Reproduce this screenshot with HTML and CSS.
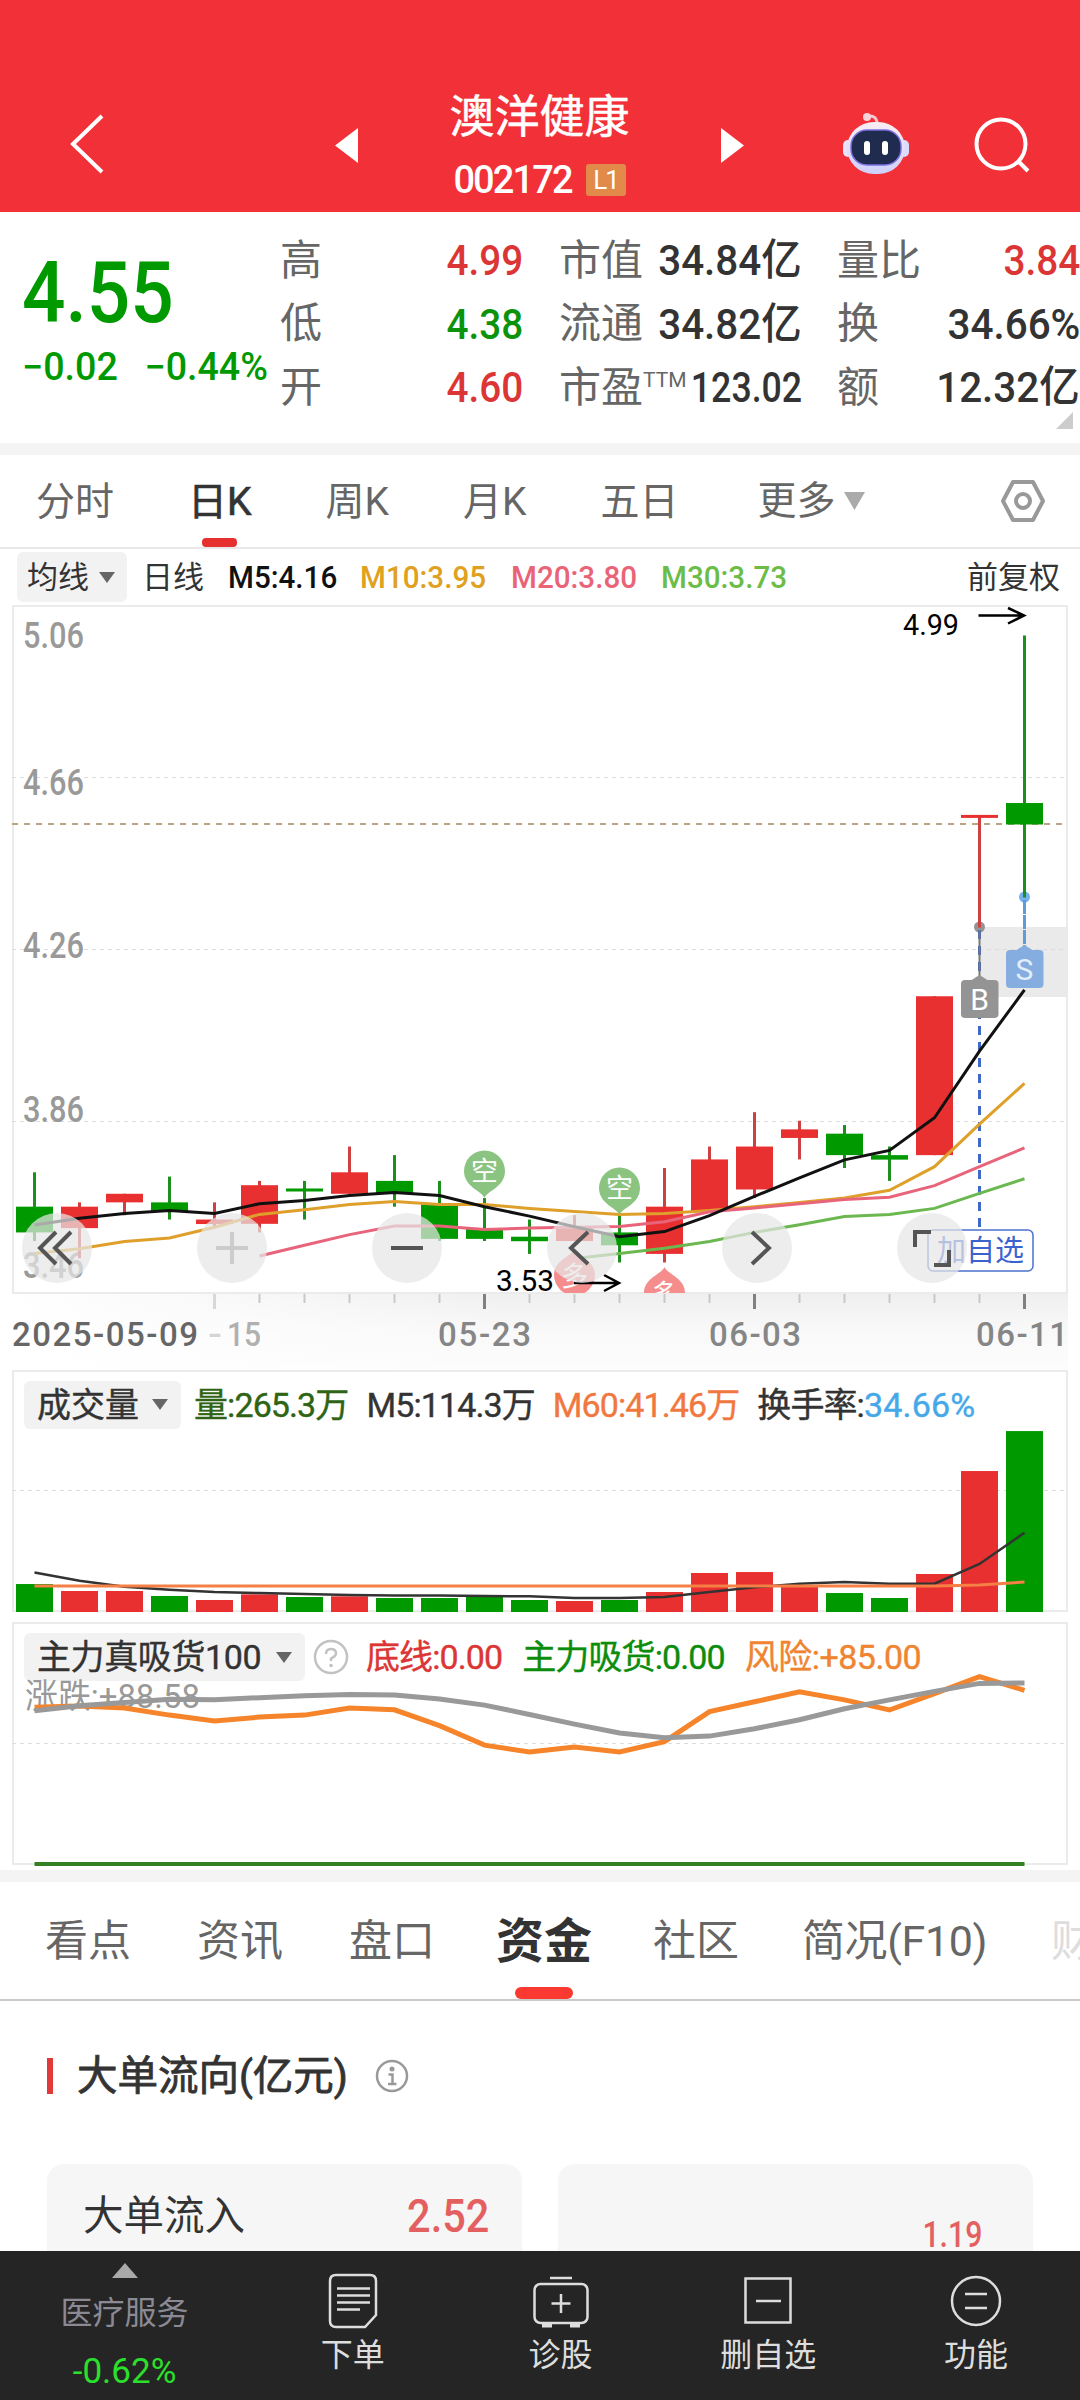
FILE: index.html
```html
<!DOCTYPE html>
<html lang="zh-CN">
<head>
  <meta charset="UTF-8" />
  <title>澳洋健康 002172</title>
  <link rel="stylesheet" href="styles.css">
</head>
<body>
  <header class="header">
    <svg class="back" width="40" height="64" viewBox="0 0 40 64"><path d="M35 4 L6 32 L35 60" fill="none" stroke="#fff" stroke-width="4"/></svg>
    <svg class="prev" width="23" height="35" viewBox="0 0 23 35"><path d="M23 0 V35 L0 17.5z" fill="#fff"/></svg>
    <div class="stock">
      <div class="stock-name">澳洋健康</div>
      <div class="stock-code"><span>002172</span><span class="level">L1</span></div>
    </div>
    <svg class="next" width="23" height="35" viewBox="0 0 23 35"><path d="M0 0 V35 L23 17.5z" fill="#fff"/></svg>
    <svg class="robot" width="68" height="62" viewBox="0 0 68 62">
      <defs>
        <linearGradient id="shell" x1="0" y1="0" x2="0" y2="1"><stop offset="0" stop-color="#fbeef4"/><stop offset="1" stop-color="#cdd0fb"/></linearGradient>
      </defs>
      <path d="M26 4 Q35 3 35 12" fill="none" stroke="#f9c9d3" stroke-width="3"/>
      <circle cx="25" cy="5" r="4" fill="#f9d3dc"/>
      <rect x="1" y="28" width="10" height="17" rx="5" fill="#e9e3fb"/>
      <rect x="57" y="28" width="10" height="17" rx="5" fill="#d9dafc"/>
      <rect x="5" y="10" width="58" height="52" rx="27" fill="url(#shell)"/>
      <rect x="9" y="18" width="50" height="35" rx="16" fill="#202b50" stroke="#7a6fe0" stroke-width="1.5"/>
      <rect x="22" y="29" width="6" height="14" rx="3" fill="#fff"/>
      <rect x="40" y="29" width="6" height="14" rx="3" fill="#fff"/>
    </svg>
    <svg class="search" width="60" height="60" viewBox="0 0 60 60"><circle cx="28" cy="29" r="24.5" fill="none" stroke="#fff" stroke-width="4"/><path d="M45 46 L55 56" stroke="#fff" stroke-width="4"/></svg>
  </header>

  <section class="quote">
    <div class="price">
      <div class="price-now">4.55</div>
      <div class="price-change"><span>−0.02</span><span>−0.44%</span></div>
    </div>
    <dl class="col col-a">
      <div><dt>高</dt><dd class="up">4.99</dd></div>
      <div><dt>低</dt><dd class="down">4.38</dd></div>
      <div><dt>开</dt><dd class="up">4.60</dd></div>
    </dl>
    <dl class="col col-b">
      <div><dt>市值</dt><dd>34.84亿</dd></div>
      <div><dt>流通</dt><dd>34.82亿</dd></div>
      <div><dt>市盈<sup>TTM</sup></dt><dd class="ttm">123.02</dd></div>
    </dl>
    <dl class="col col-c">
      <div><dt>量比</dt><dd class="up">3.84</dd></div>
      <div><dt>换</dt><dd>34.66%</dd></div>
      <div><dt>额</dt><dd>12.32亿</dd></div>
    </dl>
    <i class="corner"></i>
  </section>

  <nav class="periods">
    <span>分时</span>
    <span class="active">日K</span>
    <span>周K</span>
    <span>月K</span>
    <span>五日</span>
    <span class="more">更多<svg width="21" height="18" viewBox="0 0 21 18"><path d="M0 0 H21 L10.5 18z" fill="#aaa"/></svg></span>
    <svg class="settings" width="46" height="44" viewBox="0 0 46 44"><path d="M13 3 H33 L43 22 L33 41 H13 L3 22z" fill="none" stroke="#999" stroke-width="4" stroke-linejoin="round"/><circle cx="23" cy="22" r="7" fill="none" stroke="#999" stroke-width="4"/></svg>
  </nav>

  <div class="legend legend-ma">
    <span class="pill">均线<i class="caret"></i></span>
    <span class="cn">日线</span>
    <span class="ma m5">M5:4.16</span>
    <span class="ma m10">M10:3.95</span>
    <span class="ma m20">M20:3.80</span>
    <span class="ma m30">M30:3.73</span>
    <span class="adjust">前复权</span>
  </div>

  <div class="kline">
    <svg width="1080" height="765" viewBox="0 605 1080 765">
      <defs>
        <linearGradient id="axisBg" x1="0" y1="0" x2="0" y2="1"><stop offset="0" stop-color="#efefef"/><stop offset="0.45" stop-color="#f8f8f8"/><stop offset="1" stop-color="#fdfdfd"/></linearGradient>
        <linearGradient id="axisFade" x1="0" y1="0" x2="1" y2="0"><stop offset="0" stop-color="#fff"/><stop offset="1" stop-color="#fff" stop-opacity="0"/></linearGradient>
        <clipPath id="plot"><rect x="12" y="605" width="1056" height="688"/></clipPath>
      </defs>
      <rect x="12" y="1293" width="1056" height="77" fill="url(#axisBg)"/>
      <rect x="12" y="1293" width="500" height="77" fill="url(#axisFade)"/>
      <rect x="13" y="606" width="1054" height="687" class="frame"/>
      <path class="grid" d="M12 777.5 H1066 M12 949.5 H1066 M12 1121.5 H1066"/>
      <path d="M12 824 H1066" stroke="#b9a582" stroke-width="2" stroke-dasharray="6 6"/>
      <g class="axis-price">
        <text x="23" y="648" textLength="61" lengthAdjust="spacingAndGlyphs">5.06</text>
        <text x="23" y="795" textLength="61" lengthAdjust="spacingAndGlyphs">4.66</text>
        <text x="23" y="958" textLength="61" lengthAdjust="spacingAndGlyphs">4.26</text>
        <text x="23" y="1122" textLength="61" lengthAdjust="spacingAndGlyphs">3.86</text>
        <text x="23" y="1278" textLength="61" lengthAdjust="spacingAndGlyphs">3.46</text>
      </g>
      <rect x="979.5" y="927" width="88" height="70" fill="#eaeaea"/>
      <path d="M979 949.5 H1066" class="grid"/>
      <circle cx="979.5" cy="927" r="5.5" fill="#949494"/>
      <circle cx="1024.5" cy="897" r="5.5" fill="#76b0ea"/>
      <path d="M1024.5 900 V946" stroke="#5f9bdb" stroke-width="3" stroke-dasharray="14 1"/>
      <g id="candles"></g>
      <path d="M979.5 930 V1229" stroke="#4068c8" stroke-width="3" stroke-dasharray="9 7"/>
      <path d="M979.5 930 V978" stroke="#777" stroke-width="2"/>
      <g id="maLines"></g>
      <g fill="#949494"><rect x="961" y="980" width="37.5" height="38" rx="4"/><path d="M970 981 L979.5 975 L989 981z"/></g>
      <text x="979.5" y="1010" class="mark">B</text>
      <g fill="#85addf"><rect x="1006" y="950" width="37.5" height="38" rx="4"/><path d="M1015 951 L1024.5 945 L1034 951z"/></g>
      <text x="1024.5" y="980" class="mark mark-s">S</text>
      <g clip-path="url(#plot)">
        <g class="bubble-k">
          <path d="M484.5 1198 C482 1191 464 1187 464 1171 A20.5 20.5 0 0 1 505 1171 C505 1187 487 1191 484.5 1198z"/><text x="484.5" y="1181">空</text>
          <path d="M619.5 1215 C617 1208 599 1204 599 1188 A20.5 20.5 0 0 1 640 1188 C640 1204 622 1208 619.5 1215z"/><text x="619.5" y="1198">空</text>
        </g>
        <g class="bubble-d">
          <path d="M574.5 1249 C577 1256 595 1260 595 1275 A20.5 20.5 0 0 1 554 1275 C554 1260 572 1256 574.5 1249z"/><text x="574.5" y="1286">多</text>
          <path d="M664.5 1267 C667 1274 685 1278 685 1293 A20.5 20.5 0 0 1 644 1293 C644 1278 662 1274 664.5 1267z"/><text x="664.5" y="1304">多</text>
        </g>
      </g>
      <rect x="928" y="1230" width="105" height="41" rx="5" fill="#fff" stroke="#4b72d0" stroke-width="1.5"/>
      <text x="937" y="1261" class="fav" textLength="87">加自选</text>
      <g class="extreme">
        <text x="903" y="635" textLength="56" lengthAdjust="spacingAndGlyphs">4.99</text>
        <path d="M978.5 615.5 H1024 M1008 608 L1024 615.5 L1008 623.5"/>
        <text x="496" y="1291" textLength="58" lengthAdjust="spacingAndGlyphs">3.53</text>
        <path d="M574 1283 H619 M604 1275 L619 1283 L604 1291"/>
      </g>
      <g id="ticks"></g>
      <g class="axis-date">
        <text x="12" y="1346" textLength="186" fill="#666">2025-05-09</text>
        <text x="208" y="1346" textLength="14" lengthAdjust="spacingAndGlyphs" fill="#d5d5d5">-</text>
        <text x="227" y="1346" textLength="34" lengthAdjust="spacingAndGlyphs" fill="#b0b0b0">15</text>
        <text x="438" y="1346" textLength="93">05-23</text>
        <text x="709" y="1346" textLength="92">06-03</text>
        <text x="976" y="1346" textLength="92">06-11</text>
      </g>
    </svg>
    <div class="tools">
      <button><svg viewBox="0 0 70 70"><path d="M34 19 L18 35 L34 51 M49 19 L33 35 L49 51"/></svg></button>
      <button class="off"><svg viewBox="0 0 70 70"><path d="M19 35 H51 M35 19 V51"/></svg></button>
      <button><svg viewBox="0 0 70 70"><path d="M19 35 H51"/></svg></button>
      <button><svg viewBox="0 0 70 70"><path d="M41 19 L24 35 L41 51"/></svg></button>
      <button><svg viewBox="0 0 70 70"><path d="M30 19 L47 35 L30 51"/></svg></button>
      <button><svg viewBox="0 0 70 70"><path d="M18 34 V19 H34 M37 52 H52 V37"/></svg></button>
    </div>
  </div>

  <div class="sub volume">
    <div class="legend">
      <span class="pill">成交量<i class="caret"></i></span>
      <span class="vol">量:265.3万</span>
      <span class="vm5">M5:114.3万</span>
      <span class="vm60">M60:41.46万</span>
      <span class="turnover">换手率:<b>34.66%</b></span>
    </div>
    <svg width="1080" height="184" viewBox="0 1428 1080 184">
      <path class="grid" d="M12 1490.5 H1066"/>
      <g id="volume"></g>
    </svg>
  </div>

  <div class="sub risk">
    <div class="legend">
      <span class="pill">主力真吸货100<i class="caret"></i></span>
      <svg class="help" width="36" height="36" viewBox="0 0 36 36"><circle cx="18" cy="18" r="16" fill="none" stroke="#c2c2c2" stroke-width="2.5"/><path d="M13 15 Q13 10 18 10 Q23 10 23 14.5 Q23 17 18 19.500 V22" fill="none" stroke="#c2c2c2" stroke-width="2.5"/><circle cx="18" cy="26.500" r="1.8" fill="#c2c2c2"/></svg>
      <span class="up">底线:0.00</span>
      <span class="main">主力吸货:0.00</span>
      <span class="warn">风险:+85.00</span>
    </div>
    <svg class="risk-plot" width="1080" height="186" viewBox="0 1681 1080 186">
      <text x="25" y="1708" class="trend" textLength="175" lengthAdjust="spacingAndGlyphs">涨跌:+88.58</text>
      <path class="grid" d="M12 1743.5 H1066"/>
      <g id="risk"></g>
    </svg>
  </div>

  <nav class="tabs">
    <span>看点</span>
    <span>资讯</span>
    <span>盘口</span>
    <span class="active">资金</span>
    <span>社区</span>
    <span class="brief">简况(F10)</span>
    <span class="cut">财</span>
  </nav>

  <section class="flow">
    <h2>大单流向(亿元)
      <svg width="34" height="34" viewBox="0 0 34 34"><circle cx="17" cy="17" r="15" fill="none" stroke="#999" stroke-width="2.5"/><circle cx="17" cy="10" r="2.5" fill="#999"/><path d="M13.500 15.500 H17.500 V25 M13 25 H21.500" fill="none" stroke="#999" stroke-width="2.5"/></svg>
    </h2>
    <div class="cards">
      <div class="card"><span>大单流入</span><b>2.52</b></div>
      <div class="card card-bar"><b>1.19</b></div>
    </div>
  </section>

  <footer class="bottom">
    <div class="sector">
      <svg width="26" height="15" viewBox="0 0 26 15"><path d="M13 0 L26 15 H0z" fill="#aaa"/></svg>
      <span>医疗服务</span>
      <b>-0.62%</b>
    </div>
    <div class="item">
      <svg width="60" height="56" viewBox="0 0 60 56"><path d="M13 2 H47 Q53 2 53 8 V42 L42 54 H13 Q7 54 7 48 V8 Q7 2 13 2z"/><path d="M14 15.500 H47 M14 22.500 H47 M14 29.500 H47 M14 36.500 H37"/></svg>
      <span>下单</span>
    </div>
    <div class="item">
      <svg width="60" height="56" viewBox="0 0 60 56"><path d="M19 5 H41"/><rect x="3.500" y="11" width="53" height="39" rx="6"/><path d="M30 21 V40 M20.500 30.500 H39.500"/><path d="M11 52.500 H21 M39 52.500 H49" stroke-width="4"/></svg>
      <span>诊股</span>
    </div>
    <div class="item">
      <svg width="60" height="56" viewBox="0 0 60 56"><rect x="7.500" y="5.500" width="45" height="44"/><path d="M18 28 H43"/></svg>
      <span>删自选</span>
    </div>
    <div class="item">
      <svg width="60" height="56" viewBox="0 0 60 56"><circle cx="30" cy="28" r="24"/><path d="M19 21 H41 M19 35 H41"/></svg>
      <span>功能</span>
    </div>
  </footer>

  <script src="chart.js"></script>
</body>
</html>
```
FILE: styles.css
```css
* {
  box-sizing: border-box;
}

body {
  margin: 0;
  width: 1080px;
  height: 2400px;
  overflow: hidden;
  display: flex;
  flex-direction: column;
  background: #fff;
  color: #333;
  font-family: Roboto, "Noto Sans CJK SC", sans-serif;
  line-height: 1;
}

svg {
  display: block;
  flex: none;
}

.up {
  color: #dc3535;
}

.down {
  color: #0c930c;
}

/* header */
.header {
  height: 212px;
  flex: none;
  padding: 77px 40px 0 67px;
  display: flex;
  background: #f23037;
  color: #fff;
}

.back {
  margin-top: 35px;
}

.prev {
  margin: 51px 0 0 228px;
}

.stock {
  width: 363px;
  display: flex;
  flex-direction: column;
  align-items: center;
}

.stock-name {
  height: 76px;
  font-size: 45px;
  line-height: 81px;
  -webkit-text-stroke: 0.5px #fff;
}

.stock-code {
  display: flex;
  align-items: center;
  height: 54px;
  font-size: 38px;
  font-weight: 500;
  letter-spacing: -1.9px;
}

.level {
  width: 40px;
  height: 32px;
  margin-left: 14px;
  border-radius: 3px;
  background: #e18a49;
  font-size: 26px;
  font-weight: 400;
  line-height: 33px;
  text-align: center;
}

.next {
  margin-top: 51px;
}

.robot {
  margin: 35px 0 0 98px;
}

.search {
  margin: 38px 0 0 63px;
}

/* quote */
.quote {
  position: relative;
  height: 243px;
  flex: none;
  display: flex;
  border-bottom: 12px solid #f4f4f4;
}

.price {
  width: 280px;
  padding: 38px 0 0 22px;
  color: #009900;
}

.price-now {
  font-size: 85px;
  font-weight: 500;
  line-height: 87px;
  transform: scaleX(0.9);
  transform-origin: left;
}

.price-change {
  display: flex;
  gap: 27px;
  margin-top: 9px;
  font-size: 38px;
  font-weight: 500;
  line-height: 42px;
  white-space: nowrap;
  transform: scaleX(0.99);
  transform-origin: left;
}

.col {
  margin: 17px 0 0;
  height: 192px;
}

.col div {
  height: 63.5px;
  display: flex;
  justify-content: space-between;
  align-items: center;
  white-space: nowrap;
}

.col dt {
  color: #666;
  font-size: 42px;
}

.col dd {
  margin: 0;
  font-size: 43px;
  font-weight: 500;
  transform: scaleX(0.94);
  transform-origin: right;
}

.col .up,
.col .down {
  transform: scaleX(0.9);
}

.col .ttm {
  margin-left: -22px;
  transform: scaleX(0.83);
}

.col-a {
  width: 243px;
}

.col-b {
  width: 243px;
  margin-left: 36px;
}

.col-c {
  width: 243px;
  margin-left: 35px;
}

sup {
  font-size: 21px;
  vertical-align: 15px;
}

.corner {
  position: absolute;
  left: 1056px;
  bottom: 14px;
  border-left: 17px solid transparent;
  border-bottom: 17px solid #ccc;
}

/* period tabs */
.periods {
  height: 94px;
  flex: none;
  display: flex;
  align-items: center;
  gap: 74px;
  padding: 0 34px 0 36px;
  border-bottom: 2px solid #e8e8e8;
  color: #666;
  font-size: 39px;
}

.periods span {
  height: 92px;
  line-height: 95px;
}

.periods .active {
  position: relative;
  color: #333;
  -webkit-text-stroke: 0.7px #333;
}

.periods .active::after {
  content: "";
  position: absolute;
  left: 14px;
  bottom: 0;
  width: 35px;
  height: 9px;
  border-radius: 4px;
  background: #e63030;
}

.periods .more {
  display: flex;
  align-items: center;
  gap: 8px;
  margin-left: 5px;
}

.settings {
  margin-left: auto;
}

/* indicator legends */
.legend {
  display: flex;
  align-items: center;
  white-space: nowrap;
}

.legend-ma {
  height: 56px;
  flex: none;
  gap: 26px;
  padding: 0 20px 0 17px;
  font-size: 31px;
}

.pill {
  display: flex;
  align-items: center;
  justify-content: space-between;
  border-radius: 6px;
  background: #f2f2f2;
  color: #333;
}

.legend-ma .pill {
  width: 110px;
  height: 50px;
  padding: 0 12px 0 10px;
  margin-right: -11px;
}

.legend-ma .cn {
  margin-right: -2px;
}

.caret {
  border: 8px solid transparent;
  border-top: 11px solid #666;
  border-bottom: 0;
}

.ma {
  margin-right: -11.8px;
  font-size: 32px;
  font-weight: 500;
  transform: scaleX(0.925);
  transform-origin: left;
}

.m5 { color: #111; }
.m10 { color: #e0a020; }
.m20 { color: #ea6478; }
.m30 { color: #6cbc48; }

.adjust {
  margin-left: auto;
}

/* candlestick chart */
.kline {
  position: relative;
  height: 765px;
  flex: none;
}

.frame {
  fill: none;
  stroke: #ebebeb;
  stroke-width: 2;
}

.grid {
  fill: none;
  stroke: #dcdcdc;
  stroke-width: 1;
  stroke-dasharray: 4 4;
}

.axis-price {
  fill: #999;
  font-size: 36px;
  font-weight: 500;
}

.axis-date {
  fill: #868686;
  font-size: 33px;
  font-weight: 500;
}

.mark {
  fill: #fff;
  font-size: 30px;
  text-anchor: middle;
}

.mark-s {
  fill: #e4eefb;
}

.bubble-k { fill: #8bc481; }
.bubble-d { fill: #f68d8d; }

.bubble-k text,
.bubble-d text {
  fill: #fff;
  font-size: 27px;
  text-anchor: middle;
}

.fav {
  fill: #3b63cf;
  font-size: 29px;
}

.extreme {
  font-size: 29px;
  fill: #000;
}

.extreme path {
  fill: none;
  stroke: #000;
  stroke-width: 2.5;
}

.tools {
  position: absolute;
  left: 22px;
  top: 608px;
  display: flex;
  gap: 105px;
}

.tools button {
  width: 70px;
  height: 70px;
  padding: 0;
  border: none;
  border-radius: 50%;
  background: rgba(230, 230, 230, 0.72);
}

.tools path {
  fill: none;
  stroke: #555;
  stroke-width: 4;
}

.tools .off path {
  stroke: #ccc;
}

/* sub charts */
.sub {
  flex: none;
  background: linear-gradient(#ebebeb, #ebebeb) 12px 0 / 1056px 2px no-repeat,
    linear-gradient(#ebebeb, #ebebeb) 12px 100% / 1056px 2px no-repeat,
    linear-gradient(#ebebeb, #ebebeb) 12px 0 / 2px 100% no-repeat,
    linear-gradient(#ebebeb, #ebebeb) 1066px 0 / 2px 100% no-repeat;
}

.sub .legend {
  height: 59px;
  padding: 11px 0 0 24px;
  font-size: 34px;
  letter-spacing: -0.9px;
  -webkit-text-stroke: 0.4px;
}

.sub .pill {
  height: 48px;
  padding: 0 13px;
  letter-spacing: 0;
}

.volume {
  height: 242px;
}

.volume .legend {
  height: 58px;
  gap: 18px;
}

.volume .pill {
  width: 157px;
  margin-right: -5px;
}

.vol { color: #2e6414; }
.vm60 { color: #f07840; }

.turnover b {
  color: #45a8e8;
  font-weight: 400;
  letter-spacing: 0.2px;
}

.risk {
  height: 243px;
  margin-top: 10px;
}

.risk .legend {
  gap: 20px;
}

.risk .pill {
  width: 281px;
  margin-right: -12px;
  letter-spacing: -0.4px;
}

.risk-plot {
  overflow: visible;
}

.help {
  margin-right: -3px;
}

.main { color: #0c8c0c; }

.risk .warn {
  color: #f08430;
  letter-spacing: -0.5px;
}

.trend {
  fill: #999;
  font-size: 34px;
}

/* content tabs */
.tabs {
  height: 131px;
  flex: none;
  margin-top: 5px;
  padding-left: 45px;
  display: flex;
  align-items: center;
  gap: 66px;
  border-top: 12px solid #f4f4f4;
  border-bottom: 2px solid #cacaca;
  color: #666;
  font-size: 43px;
  white-space: nowrap;
}

.tabs span {
  height: 117px;
  line-height: 119px;
}

.tabs .active {
  position: relative;
  margin: 0 -5px;
  color: #333;
  font-size: 48px;
  font-weight: 700;
}

.tabs .active::after {
  content: "";
  position: absolute;
  left: 19px;
  bottom: 0;
  width: 58px;
  height: 12px;
  border-radius: 6px;
  background: #fa3a30;
}

.tabs .brief {
  margin-left: -3px;
  letter-spacing: -0.4px;
}

.tabs .cut {
  margin-left: -2px;
  color: #ddd;
}

/* big order flow */
.flow {
  flex: none;
  height: 250px;
  overflow: hidden;
  padding: 0 47px;
}

.flow h2 {
  display: flex;
  align-items: center;
  height: 36px;
  margin: 57px 0 70px;
  padding-left: 24px;
  border-left: 6px solid #e03a3a;
  font-size: 40.5px;
  font-weight: 400;
  -webkit-text-stroke: 0.8px #333;
}

.flow h2 svg {
  margin-left: 27px;
}

.cards {
  display: grid;
  grid-template-columns: 475px 475px;
  gap: 36px;
}

.card {
  height: 200px;
  padding: 31px 33px 0 36px;
  display: flex;
  justify-content: space-between;
  border-radius: 17px;
  background: #f6f6f6;
  font-size: 40.5px;
  line-height: 42px;
}

.card b {
  color: #e46060;
  font-size: 46px;
  font-weight: 500;
  transform: scaleX(0.9);
  transform-origin: right;
}

.card-bar {
  justify-content: flex-end;
  padding: 50px 51px 0 0;
}

.card-bar b {
  height: 30px;
  margin-top: 6px;
  font-size: 36px;
  line-height: 30px;
  transform: scaleX(0.84);
}

/* bottom bar */
.bottom {
  flex: none;
  height: 149px;
  display: flex;
  background: #252525;
  color: #ddd;
  font-size: 32px;
}

.sector {
  width: 249px;
  padding-top: 12px;
  display: flex;
  flex-direction: column;
  align-items: center;
  color: #8b8a94;
}

.sector span {
  margin-top: 19px;
}

.sector b {
  margin-top: 25px;
  color: #2be02b;
  font-size: 35px;
  font-weight: 400;
}

.item {
  flex: 1;
  padding-top: 22px;
  display: flex;
  flex-direction: column;
  align-items: center;
  gap: 10px;
}

.item svg {
  fill: none;
  stroke: #ddd;
  stroke-width: 2.5;
}
```
FILE: chart.js
```js
const RED = "#e83030";
const GREEN = "#009900";
const STEP = 45;
const LEFT = 34.5;

// [open, high, low, close, volume]
const days = [
  [3.66, 3.74, 3.58, 3.60, 41],
  [3.61, 3.67, 3.54, 3.66, 30.8],
  [3.67, 3.69, 3.64, 3.69, 30.8],
  [3.67, 3.73, 3.63, 3.65, 23.5],
  [3.62, 3.67, 3.61, 3.63, 17.6],
  [3.62, 3.72, 3.60, 3.71, 25.9],
  [3.70, 3.72, 3.63, 3.70, 22],
  [3.69, 3.80, 3.69, 3.74, 23],
  [3.72, 3.78, 3.66, 3.69, 20.5],
  [3.665, 3.72, 3.58, 3.585, 20.5],
  [3.61, 3.68, 3.58, 3.585, 23.5],
  [3.59, 3.63, 3.55, 3.58, 17.6],
  [3.58, 3.64, 3.58, 3.61, 16.1],
  [3.60, 3.64, 3.53, 3.57, 17.6],
  [3.55, 3.75, 3.53, 3.66, 29.3],
  [3.65, 3.80, 3.65, 3.77, 57.2],
  [3.70, 3.88, 3.68, 3.80, 58.6],
  [3.82, 3.86, 3.77, 3.84, 36.6],
  [3.83, 3.85, 3.75, 3.78, 27.8],
  [3.78, 3.80, 3.72, 3.77, 20.5],
  [3.78, 4.15, 3.78, 4.15, 55.7],
  [4.57, 4.57, 4.31, 4.57, 206.7],
  [4.60, 4.99, 4.38, 4.55, 265.3]
];

const ma5 = [3.617, 3.633, 3.644, 3.651, 3.644, 3.667, 3.674, 3.686, 3.693, 3.686, 3.660, 3.638, 3.613, 3.590, 3.602, 3.639, 3.684, 3.727, 3.769, 3.791, 3.867, 4.022, 4.165];
const ma10 = [3.551, 3.562, 3.579, 3.587, 3.612, 3.642, 3.653, 3.665, 3.672, 3.665, 3.665, 3.656, 3.649, 3.642, 3.644, 3.651, 3.660, 3.670, 3.680, 3.698, 3.753, 3.852, 3.947];
const ma20 = [3.545, 3.570, 3.595, 3.615, 3.615, 3.607, 3.610, 3.612, 3.614, 3.625, 3.648, 3.657, 3.667, 3.677, 3.682, 3.709, 3.753, 3.797];
const ma30 = [3.539, 3.551, 3.563, 3.579, 3.600, 3.618, 3.637, 3.642, 3.656, 3.691, 3.725];

const vol5 = [58.1, 45.9, 37.1, 32.7, 29.3, 27.8, 26.4, 24.9, 24.4, 24.4, 23.5, 23, 20.5, 20.5, 22, 29.3, 36.2, 41.5, 44, 41.5, 41.5, 70.4, 116.3];
const vol60 = [38.1, 38.1, 38.1, 38.1, 38.1, 38.1, 38.1, 38.1, 38.1, 38.1, 38.1, 38.1, 38.1, 38.1, 38.1, 38.1, 38.1, 38.1, 38.1, 38.1, 38.1, 39.5, 44];

const risk = [76.7, 77.3, 76.3, 72.9, 70, 71.9, 72.9, 76.3, 75.5, 67.7, 58.2, 54.8, 57.3, 54.8, 59.9, 74.6, 79.4, 84.3, 80.3, 75.4, 83.4, 91.7, 85];
const trend = [75, 77.5, 79, 80.6, 80.4, 81.4, 82.4, 82.9, 82.7, 80.8, 77.8, 73.2, 68.5, 64.1, 61.8, 62.6, 66.2, 70.6, 76, 80.3, 84.5, 88.4, 88.58];

const xAt = i => LEFT + i * STEP;
const priceY = p => 605.5 + (5.06 - p) * 429.4;
const volY = v => 1612 - v * 0.682;
const riskY = v => 1864 - v * 2.043;

function line(values, scale, color, width) {
  const start = days.length - values.length;
  const points = values.map((v, i) => `${xAt(i + start)},${scale(v).toFixed(1)}`).join(" ");
  return `<polyline points="${points}" fill="none" stroke="${color}" stroke-width="${width}"/>`;
}

function isUp(i) {
  const [open, , , close] = days[i];
  return close > open || i === 21;
}

let candles = "";
let volume = "";
let ticks = "";
days.forEach(([open, high, low, close, vol], i) => {
  const color = isUp(i) ? RED : GREEN;
  const x = xAt(i);
  const top = priceY(Math.max(open, close));
  const height = Math.abs(open - close) * 429.4;
  const wick = isUp(i) ? "#cf4040" : "#1c8f1c";
  candles += `<path d="M${x} ${priceY(high)} V${priceY(low)}" stroke="${wick}" stroke-width="3"/>`;
  candles += `<rect x="${x - 18.5}" y="${height ? top : top - 1}" width="37" height="${height ? Math.max(height, 4.5) : 3}" fill="${color}"/>`;
  volume += `<rect x="${x - 18.5}" y="${volY(vol)}" width="37" height="${vol * 0.682}" fill="${color}"/>`;
  if (i >= 4) {
    const big = i === 4 || i === 10 || i === 16 || i === 22;
    const tickColor = i === 4 ? "#d8d8d8" : big ? "#808080" : "#c8c8c8";
    ticks += `<path d="M${x} 1294 V${big ? 1309 : 1303}" stroke="${tickColor}" stroke-width="${big ? 3 : 2}"/>`;
  }
});

document.getElementById("candles").innerHTML = candles;
document.getElementById("ticks").innerHTML = ticks;
document.getElementById("maLines").innerHTML =
  line(ma30, priceY, "#6cb850", 3) +
  line(ma10, priceY, "#dea02a", 3) +
  line(ma20, priceY, "#e8647a", 3) +
  line(ma5, priceY, "#111", 3);
document.getElementById("volume").innerHTML =
  volume + line(vol5, volY, "#333", 2.5) + line(vol60, volY, "#f57f45", 3);
document.getElementById("risk").innerHTML =
  line(risk, riskY, "#f5842a", 5) +
  line(trend, riskY, "#999", 5) +
  `<path d="M${LEFT} 1864 H${xAt(22)}" stroke="#358022" stroke-width="4"/>`;
```
